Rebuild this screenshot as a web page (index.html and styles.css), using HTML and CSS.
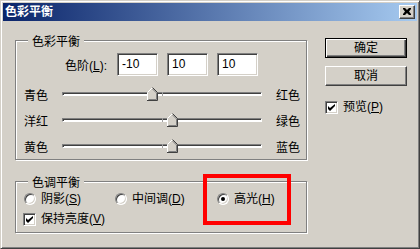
FILE: index.html
```html
<!DOCTYPE html>
<html>
<head>
<meta charset="utf-8">
<link rel="stylesheet" href="styles.css">
</head>
<body>
<div class="window">
  <div class="titlebar">
    <span class="title">色彩平衡</span>
    <div class="close"><svg width="8" height="7" viewBox="0 0 8 7"><path d="M0 0h2l2 2 2-2h2v1L6 3.5 8 6v1H6L4 5 2 7H0V6l2-2.5L0 1z" fill="#000"/></svg></div>
  </div>
  <div class="content">
    <div class="left">
      <div class="group g1">
        <div class="group-title">色彩平衡</div>
        <div class="levels">
          <span class="levels-label">色阶(<u>L</u>):</span>
          <div class="input">-10</div>
          <div class="input">10</div>
          <div class="input">10</div>
        </div>
        <div class="slider-row">
          <span class="s-left">青色</span>
          <div class="track"><span class="tick"></span><svg class="thumb" style="left:84px" width="11" height="14" viewBox="0 0 11 14"><path d="M0.5 13.5V5.5L5.5 0.5L10.5 5.5V13.5Z" fill="#d4d0c8"/><path d="M0.5 13V5.5L5.5 0.5" stroke="#fff" fill="none"/><path d="M5.5 0.5L10.5 5.5V13.5H0" stroke="#404040" fill="none"/><path d="M1.5 12.5H9.5V6L5.5 2" stroke="#808080" fill="none"/></svg></div>
          <span class="s-right">红色</span>
        </div>
        <div class="slider-row">
          <span class="s-left">洋红</span>
          <div class="track"><span class="tick"></span><svg class="thumb" style="left:104px" width="11" height="14" viewBox="0 0 11 14"><path d="M0.5 13.5V5.5L5.5 0.5L10.5 5.5V13.5Z" fill="#d4d0c8"/><path d="M0.5 13V5.5L5.5 0.5" stroke="#fff" fill="none"/><path d="M5.5 0.5L10.5 5.5V13.5H0" stroke="#404040" fill="none"/><path d="M1.5 12.5H9.5V6L5.5 2" stroke="#808080" fill="none"/></svg></div>
          <span class="s-right">绿色</span>
        </div>
        <div class="slider-row">
          <span class="s-left">黄色</span>
          <div class="track"><span class="tick"></span><svg class="thumb" style="left:104px" width="11" height="14" viewBox="0 0 11 14"><path d="M0.5 13.5V5.5L5.5 0.5L10.5 5.5V13.5Z" fill="#d4d0c8"/><path d="M0.5 13V5.5L5.5 0.5" stroke="#fff" fill="none"/><path d="M5.5 0.5L10.5 5.5V13.5H0" stroke="#404040" fill="none"/><path d="M1.5 12.5H9.5V6L5.5 2" stroke="#808080" fill="none"/></svg></div>
          <span class="s-right">蓝色</span>
        </div>
      </div>
      <div class="group g2">
        <div class="group-title">色调平衡</div>
        <div class="radios">
          <label class="opt"><span class="radio"></span>阴影(<u>S</u>)</label>
          <label class="opt"><span class="radio"></span>中间调(<u>D</u>)</label>
          <label class="opt"><span class="radio on"></span>高光(<u>H</u>)</label>
        </div>
        <label class="opt check-row"><span class="checkbox"><svg width="7" height="7" viewBox="0 0 7 7"><path d="M0 2v3l2 2 5-5V-0L2 4z" fill="#000"/></svg></span>保持亮度(<u>V</u>)</label>
      </div>
    </div>
    <div class="right">
      <div class="btn default"><span>确定</span></div>
      <div class="btn"><span>取消</span></div>
      <label class="opt preview"><span class="checkbox"><svg width="7" height="7" viewBox="0 0 7 7"><path d="M0 2v3l2 2 5-5V-0L2 4z" fill="#000"/></svg></span>预览(<u>P</u>)</label>
    </div>
  </div>
  <div class="annot"></div>
</div>
</body>
</html>
```

FILE: styles.css
```css
* { box-sizing: border-box; }
body {
  margin: 0;
  background: #d4d0c8;
  font: 12px "Liberation Sans", "Noto Sans CJK SC", sans-serif;
  color: #000;
}
u { text-decoration: underline; text-underline-offset: 1px; }
.window {
  position: relative;
  width: 420px;
  height: 249px;
  background: #d4d0c8;
  border: 1px solid;
  border-color: #d4d0c8 #404040 #404040 #d4d0c8;
  box-shadow: inset 1px 1px #fff, inset -1px -1px #808080;
  padding: 2px;
  display: flex;
  flex-direction: column;
}
.titlebar {
  height: 18px;
  background: linear-gradient(to right, #0a246a, #a6caf0);
  display: flex;
  align-items: center;
  justify-content: space-between;
  padding: 0 2px;
}
.title {
  color: #fff;
  font-weight: bold;
  font-size: 12px;
  line-height: 14px;
}
.close {
  width: 16px;
  height: 14px;
  background: #d4d0c8;
  border: 1px solid;
  border-color: #fff #404040 #404040 #fff;
  box-shadow: inset -1px -1px #808080;
  display: flex;
  align-items: center;
  justify-content: center;
  padding: 0 1px 1px 0;
}
.close svg { display: block; }
.content {
  display: flex;
  padding-left: 12px;
}
.left {
  width: 293px;
  margin-top: 19px;
  display: flex;
  flex-direction: column;
}
.group {
  width: 292px;
  border: 1px solid #808080;
  box-shadow: 1px 1px 0 #fff, inset 1px 1px 0 #fff;
  padding: 0 0 0 8px;
  display: flex;
  flex-direction: column;
}
.group-title {
  align-self: flex-start;
  margin: -6px 0 0 4px;
  padding: 0 4px;
  line-height: 14px;
  height: 14px;
  background: #d4d0c8;
}
.g1 { height: 120px; }
.levels {
  display: flex;
  align-items: center;
  margin-top: 4px;
  height: 23px;
}
.levels-label {
  width: 93px;
  text-align: right;
  padding-right: 10px;
}
.input {
  width: 41px;
  height: 23px;
  margin-right: 9px;
  background: #fff;
  border: 1px solid;
  border-color: #808080 #fff #fff #808080;
  box-shadow: inset 1px 1px #404040, inset -1px -1px #d4d0c8;
  padding: 0 0 0 4px;
  line-height: 21px;
}
.slider-row {
  display: flex;
  align-items: center;
  height: 26px;
}
.levels + .slider-row { margin-top: 5px; }
.s-left { width: 38px; }
.s-right { margin-left: 14px; }
.track {
  position: relative;
  width: 200px;
  height: 4px;
  border: 1px solid;
  border-color: #808080 #fff #fff #808080;
  box-shadow: inset 1px 1px #404040;
  background: #fff;
}
.tick {
  position: absolute;
  left: 99px;
  top: -1px;
  width: 1px;
  height: 4px;
  background: #a0a0a0;
}
.thumb {
  position: absolute;
  top: -6px;
  display: block;
}
.g2 {
  margin-top: 21px;
  height: 52px;
}
.radios {
  display: grid;
  grid-template-columns: 91px 102px auto;
  margin-top: 2px;
  height: 14px;
}
.opt {
  display: flex;
  align-items: center;
  line-height: 14px;
  white-space: nowrap;
}
.radio {
  width: 12px;
  height: 12px;
  border-radius: 50%;
  margin-right: 5px;
  background: #fff;
  border: 1px solid;
  border-color: #808080 #fff #fff #808080;
  box-shadow: inset 1px 1px #404040, inset -1px -1px #d4d0c8;
  display: flex;
  align-items: center;
  justify-content: center;
}
.radio.on::after {
  content: "";
  width: 4px;
  height: 4px;
  border-radius: 50%;
  background: #000;
}
.checkbox {
  width: 13px;
  height: 13px;
  margin-right: 5px;
  background: #fff;
  border: 1px solid;
  border-color: #808080 #fff #fff #808080;
  box-shadow: inset 1px 1px #404040, inset -1px -1px #d4d0c8;
  display: flex;
  align-items: center;
  justify-content: center;
}
.checkbox svg { display: block; }
.check-row {
  margin-top: 6px;
  margin-left: -1px;
}
.right {
  margin-left: 17px;
  margin-top: 17px;
  display: flex;
  flex-direction: column;
  width: 82px;
}
.btn {
  height: 20px;
  background: #d4d0c8;
  border: 1px solid;
  border-color: #fff #404040 #404040 #fff;
  box-shadow: inset -1px -1px #808080;
  display: flex;
  align-items: center;
  justify-content: center;
  line-height: 14px;
}
.btn.default {
  border: 1px solid #000;
  box-shadow: inset 1px 1px #fff, inset -1px -1px #404040, inset -2px -2px #808080;
}
.btn + .btn { margin-top: 8px; }
.preview { margin-top: 14px; }
.annot {
  position: absolute;
  left: 202px;
  top: 173px;
  width: 88px;
  height: 51px;
  border: 4px solid #ff0000;
}
```
